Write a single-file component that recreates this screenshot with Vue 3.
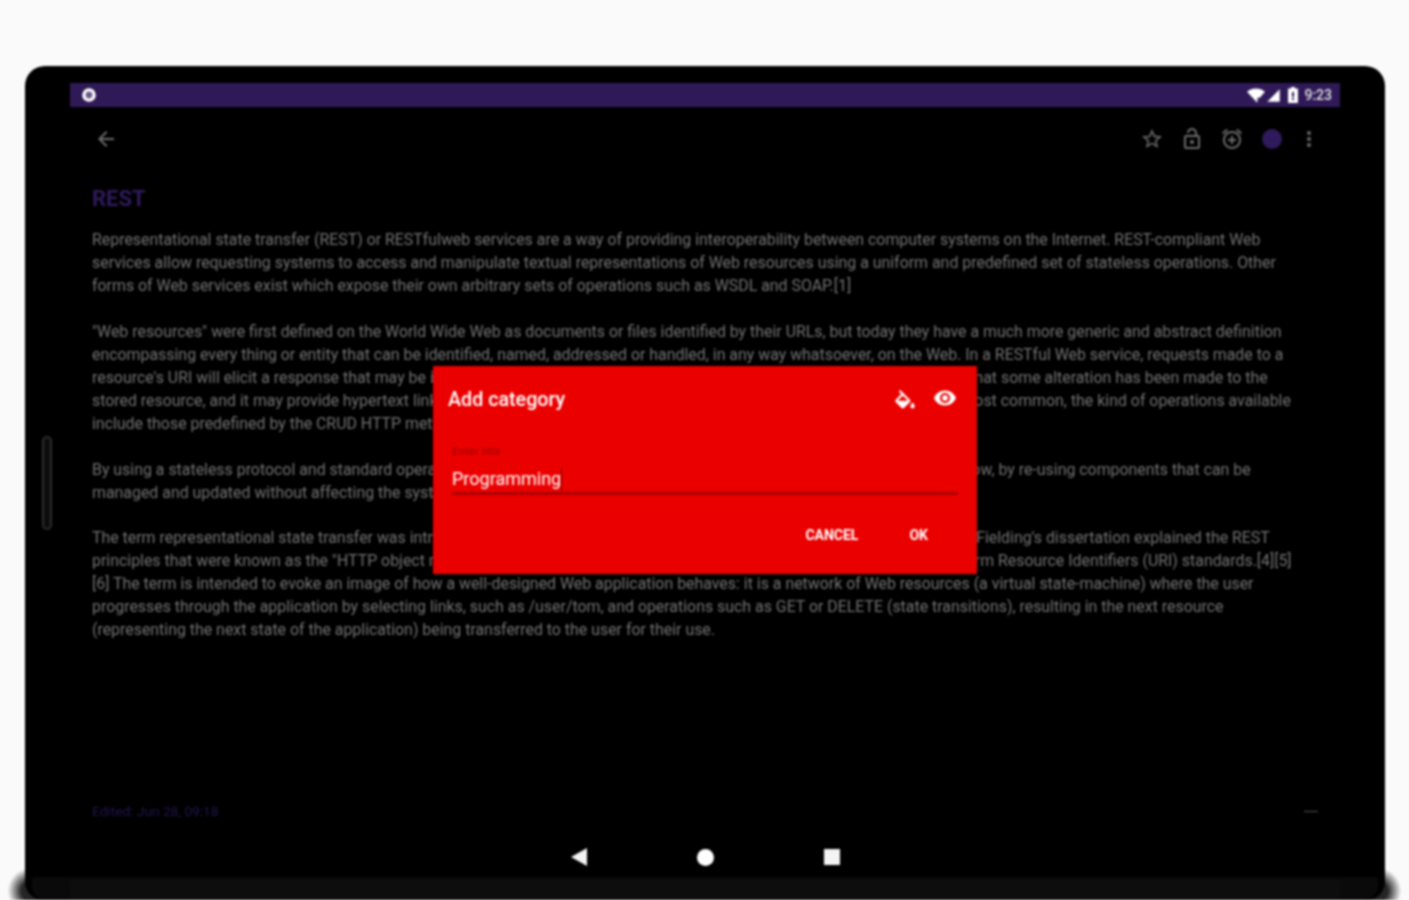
<script setup>
const paragraphs = [
  [
    'Representational state transfer (REST) or RESTfulweb services are a way of providing interoperability between computer systems on the Internet. REST-compliant Web',
    'services allow requesting systems to access and manipulate textual representations of Web resources using a uniform and predefined set of stateless operations. Other',
    'forms of Web services exist which expose their own arbitrary sets of operations such as WSDL and SOAP.[1]'
  ],
  [
    '"Web resources" were first defined on the World Wide Web as documents or files identified by their URLs, but today they have a much more generic and abstract definition',
    'encompassing every thing or entity that can be identified, named, addressed or handled, in any way whatsoever, on the Web. In a RESTful Web service, requests made to a',
    "resource's URI will elicit a response that may be in XML, HTML, JSON, or some other data format. The response may confirm that some alteration has been made to the",
    'stored resource, and it may provide hypertext links to other resources or collections of resources. When HTTP is used, as is most common, the kind of operations available',
    'include those predefined by the CRUD HTTP methods.'
  ],
  [
    'By using a stateless protocol and standard operations, REST systems aim for fast performance, reliability, and the ability to grow, by re-using components that can be',
    'managed and updated without affecting the system as a whole, even while it is running.'
  ],
  [
    "The term representational state transfer was introduced and defined in 2000 by Dr. Roy T. Fielding in his doctoral dissertation. Fielding's dissertation explained the REST",
    'principles that were known as the "HTTP object model" beginning in 1994, and were used in designing the HTTP 1.1 and Uniform Resource Identifiers (URI) standards.[4][5]',
    '[6] The term is intended to evoke an image of how a well-designed Web application behaves: it is a network of Web resources (a virtual state-machine) where the user',
    'progresses through the application by selecting links, such as /user/tom, and operations such as GET or DELETE (state transitions), resulting in the next resource',
    '(representing the next state of the application) being transferred to the user for their use.'
  ]
]
</script>

<template>
  <div class="page">
    <div class="device">
      <div class="status">
        <span class="notif"></span>
        <div class="status-right">
          <svg class="st-wifi" viewBox="0 0 24 20"><path d="M13 19 0 5c6-6 18-6 24 0l-7 8h-3v6z" fill="#fff"/></svg>
          <svg class="st-signal" viewBox="0 0 24 24"><path d="M2 22 22 2v20z" fill="#fff"/></svg>
          <svg class="st-batt" viewBox="0 0 10 16"><path d="M3 0h4v1.500h3V16H0V1.500h3zM4 5v5h2V5zm0 6v2h2v-2z" fill="#fff" fill-rule="evenodd"/></svg>
          <span class="clock">9:23</span>
        </div>
      </div>

      <div class="toolbar">
        <svg class="tb-icon" viewBox="0 0 24 24"><path d="M20 11H7.830l5.590-5.590L12 4l-8 8 8 8 1.410-1.410L7.830 13H20v-2z"/></svg>
        <div class="tb-actions">
          <svg class="tb-icon" viewBox="0 0 24 24"><path d="M22 9.240l-7.190-.62L12 2 9.190 8.630 2 9.240l5.460 4.730L5.820 21 12 17.270 18.180 21l-1.630-7.030L22 9.240zM12 15.400l-3.760 2.270 1-4.280-3.320-2.880 4.380-.38L12 6.100l1.710 4.040 4.380.38-3.320 2.880 1 4.280L12 15.400z"/></svg>
          <svg class="tb-icon" viewBox="0 0 24 24"><path d="M12 17c1.100 0 2-.9 2-2s-.9-2-2-2-2 .9-2 2 .9 2 2 2zm6-9h-1V6c0-2.760-2.240-5-5-5S7 3.240 7 6h1.900c0-1.710 1.390-3.100 3.100-3.100 1.710 0 3.100 1.390 3.100 3.100v2H6c-1.100 0-2 .9-2 2v10c0 1.100.9 2 2 2h12c1.100 0 2-.9 2-2V10c0-1.100-.9-2-2-2zm0 12H6V10h12v10z"/></svg>
          <svg class="tb-icon" viewBox="0 0 24 24"><path d="M7.880 3.390L6.600 1.860 2 5.710l1.290 1.530 4.590-3.850zM22 5.720l-4.600-3.860-1.290 1.530 4.600 3.860L22 5.720zM12 4c-4.970 0-9 4.030-9 9s4.020 9 9 9c4.970 0 9-4.030 9-9s-4.030-9-9-9zm0 16c-3.870 0-7-3.130-7-7s3.130-7 7-7 7 3.130 7 7-3.130 7-7 7zm1-11h-2v3H8v2h3v3h2v-3h3v-2h-3V9z"/></svg>
          <span class="tb-dot"></span>
          <svg class="tb-icon tb-more" viewBox="0 0 24 24"><path d="M12 8c1.100 0 2-.9 2-2s-.9-2-2-2-2 .9-2 2 .9 2 2 2zm0 2c-1.100 0-2 .9-2 2s.9 2 2 2 2-.9 2-2-.9-2-2-2zm0 6c-1.100 0-2 .9-2 2s.9 2 2 2 2-.9 2-2-.9-2-2-2z"/></svg>
        </div>
      </div>

      <main class="note">
        <h1 class="note-title">REST</h1>
        <p v-for="(lines, i) in paragraphs" :key="i" class="para">
          <span v-for="(line, j) in lines" :key="j" class="line">{{ line }}</span>
        </p>
      </main>

      <div class="footer">
        <span class="edited">Edited: Jun 28, 09:18</span>
        <span class="dash"></span>
      </div>

      <div class="navbar">
        <svg class="nav-back" viewBox="0 0 16 18"><path d="M16 0v18L0 9z"/></svg>
        <span class="nav-home"></span>
        <span class="nav-recent"></span>
      </div>
      <div class="bottom-band"></div>

      <span class="handle"></span>

      <section class="dialog">
        <div class="dlg-head">
          <span class="dlg-title">Add category</span>
          <svg class="dlg-bucket" viewBox="0 0 24 24"><path d="M16.560 8.940L7.620 0 6.210 1.410l2.380 2.380-5.150 5.150c-.59.59-.59 1.540 0 2.120l5.500 5.500c.29.29.68.44 1.060.44s.77-.15 1.060-.44l5.500-5.500c.59-.58.59-1.530 0-2.120zM5.210 10L10 5.210 14.790 10H5.210zM19 11.500s-2 2.170-2 3.500c0 1.100.9 2 2 2s2-.9 2-2c0-1.330-2-3.500-2-3.500z"/></svg>
          <svg class="dlg-eye" viewBox="0 0 24 24"><path d="M12 4.500C7 4.500 2.730 7.610 1 12c1.730 4.390 6 7.500 11 7.500s9.270-3.110 11-7.500c-1.730-4.390-6-7.500-11-7.500zM12 17c-2.760 0-5-2.240-5-5s2.240-5 5-5 5 2.240 5 5-2.240 5-5 5zm0-8c-1.660 0-3 1.340-3 3s1.340 3 3 3 3-1.340 3-3-1.340-3-3-3z"/></svg>
        </div>
        <div class="field">
          <label class="field-label">Enter title</label>
          <div class="field-value">Programming<span class="caret"></span></div>
        </div>
        <div class="dlg-actions">
          <span class="dlg-btn">CANCEL</span>
          <span class="dlg-btn">OK</span>
        </div>
      </section>
    </div>
    <span class="corner corner-l"></span>
    <span class="corner corner-r"></span>
  </div>
</template>

<style>
html, body { margin: 0; background: #fafafa; }
</style>

<style scoped>
.page {
  position: relative;
  width: 1409px;
  height: 900px;
  overflow: hidden;
  box-sizing: border-box;
  padding: 66px 24px 0 25px;
  background: #fafafa;
  font-family: Roboto, "Liberation Sans", sans-serif;
  filter: blur(0.8px);
}
.device {
  position: relative;
  height: 834px;
  background: #000;
  border-radius: 20px 20px 18px 18px;
  padding: 17px 45px 0;
  box-sizing: border-box;
  display: flex;
  flex-direction: column;
  z-index: 1;
}
.status {
  height: 24px;
  flex: none;
  background: #2f1a57;
  display: flex;
  align-items: center;
  justify-content: space-between;
  padding: 0 8px 0 11px;
}
.notif {
  width: 8px;
  height: 8px;
  border: 4px solid #fff;
  border-radius: 50%;
  background: #6a5a8a;
  box-sizing: content-box;
  transform: scale(0.85);
}
.status-right { display: flex; align-items: center; }
.st-wifi { width: 18px; height: 15px; margin-right: 1px; }
.st-signal { width: 15px; height: 15px; margin-right: 7px; }
.st-batt { width: 10px; height: 16px; margin-right: 6px; }
.clock { color: #e4e4e4; font-size: 14px; font-weight: 500; }
.toolbar {
  height: 64px;
  flex: none;
  display: flex;
  align-items: center;
  justify-content: space-between;
  padding: 0 19px 0 24px;
}
.tb-actions { display: flex; align-items: center; gap: 16px; }
.tb-icon { width: 24px; height: 24px; fill: #6a6a6a; display: block; }
.tb-more { margin-left: -3px; }
.tb-dot { width: 20px; height: 20px; margin: 0 2px; border-radius: 50%; background: #2f1a5c; }
.note { padding: 15px 0 0 22px; flex: none; height: 595px; box-sizing: border-box; }
.note-title {
  margin: 0 0 16px;
  font-size: 22px;
  line-height: 26px;
  font-weight: 700;
  color: #2f1a5c;
}
.para { margin: 0 0 23px; color: #727272; font-size: 15.9px; line-height: 23px; }
.para:nth-of-type(3) { margin-bottom: 22px; }
.line { display: block; white-space: nowrap; }
.footer {
  height: 24px;
  flex: none;
  display: flex;
  align-items: center;
  justify-content: space-between;
  padding: 0 22px 0 22px;
  margin-top: 33px;
}
.edited { color: #221450; font-size: 13.700px; }
.dash { width: 14px; height: 1px; background: #555; }
.navbar {
  position: absolute;
  left: 0;
  right: 0;
  top: 781px;
  height: 20px;
  display: flex;
  align-items: center;
  justify-content: center;
  gap: 110px;
}
.nav-back { width: 16px; height: 18px; fill: #f4f4f4; }
.nav-home { width: 17px; height: 17px; border-radius: 50%; background: #fff; }
.nav-recent { width: 16px; height: 16px; background: #f4f4f4; }
.bottom-band {
  position: absolute;
  left: 7px;
  right: 7px;
  top: 811px;
  bottom: 0;
  border-radius: 0 0 14px 14px;
  background: linear-gradient(#0d0d0d, #0d0d0d) center bottom / calc(100% - 76px) calc(100% - 3px) no-repeat, #0a0a0a;
}
.handle {
  position: absolute;
  left: 17px;
  top: 370px;
  width: 6px;
  height: 90px;
  border: 2px solid #2c2c2c;
  border-radius: 5px;
  background: #0c0c0c;
}
.dialog {
  position: absolute;
  left: 408px;
  top: 300px;
  width: 544px;
  height: 208px;
  background: #eb0000;
  box-sizing: border-box;
  padding: 0 19px 0 15px;
  display: flex;
  flex-direction: column;
}
.dlg-head { display: flex; align-items: center; height: 66px; flex: none; padding-right: 1.500px; }
.dlg-title { color: #fff; font-size: 19.700px; font-weight: 500; flex: 1; }
.dlg-bucket { width: 26px; height: 26px; fill: #fff; margin-top: 8px; }
.dlg-eye { width: 24px; height: 24px; fill: #fff; margin-left: 14.500px; margin-top: -2px; }
.field { margin-left: 4px; border-bottom: 3px solid #a80000; height: 63px; flex: none; box-sizing: border-box; padding-top: 13px; }
.field-label { display: block; color: #9c0000; font-size: 11.500px; line-height: 13px; }
.field-value { color: #fff; font-size: 18px; line-height: 24px; margin-top: 9px; display: flex; align-items: center; }
.caret { width: 1px; height: 24px; background: #8a0000; }
.dlg-actions { display: flex; justify-content: flex-end; align-items: center; gap: 51px; margin-top: 32px; padding-right: 30px; }
.dlg-btn { color: #fff; font-size: 14px; font-weight: 700; line-height: 16px; }
.corner {
  position: absolute;
  top: 868px;
  width: 46px;
  height: 46px;
  border-radius: 50%;
  background: radial-gradient(circle, rgba(0,0,0,.85) 30%, rgba(0,0,0,0) 72%);
  z-index: 0;
}
.corner-l { left: 8px; }
.corner-r { right: 8px; }
</style>
